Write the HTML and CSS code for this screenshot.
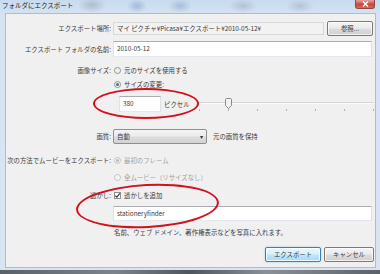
FILE: index.html
```html
<!DOCTYPE html>
<html lang="ja">
<head>
<meta charset="utf-8">
<link rel="stylesheet" href="styles.css">
</head>
<body>
<div class="window">
  <div class="titlebar">
    <span class="title">フォルダにエクスポート</span>
    <span class="close"><svg width="7" height="6" viewBox="0 0 7 6"><path d="M1 0.5 L6 5.5 M6 0.5 L1 5.5" stroke="#fff" stroke-width="1.4"/></svg></span>
  </div>
  <div class="body">
    <div class="row r-loc">
      <div class="label">エクスポート場所:</div>
      <div class="field readonly">マイ ピクチャ¥Picasa¥エクスポート¥2010-05-12¥</div>
      <div class="btn browse">参照...</div>
    </div>
    <div class="row r-name">
      <div class="label">エクスポート フォルダの名前:</div>
      <div class="field input wide">2010-05-12</div>
    </div>
    <div class="row r-size1">
      <div class="label">画像サイズ:</div>
      <span class="radio"></span><span>元のサイズを使用する</span>
    </div>
    <div class="row r-size2">
      <div class="label"></div>
      <span class="radio on"></span><span>サイズの変更:</span>
    </div>
    <div class="row r-px">
      <div class="label"></div>
      <div class="field input px">380</div>
      <span class="unit">ピクセル</span>
      <div class="slider">
        <div class="track"></div>
        <div class="ticks"><i></i><i></i><i></i><i></i><i></i><i></i><i></i></div>
        <div class="thumb"><svg width="7" height="11" viewBox="0 0 7 11"><path d="M0.5 1.5 Q0.5 0.5 1.5 0.5 L5.5 0.5 Q6.5 0.5 6.5 1.5 L6.5 7.5 L3.5 10.5 L0.5 7.5 Z" fill="#f2f2f2" stroke="#8a8a8a"/></svg></div>
      </div>
    </div>
    <div class="row r-q">
      <div class="label">画質:</div>
      <div class="combo"><span>自動</span><span class="arrow">▾</span></div>
      <span class="qnote">元の画質を保持</span>
    </div>
    <div class="row r-mov1 disabled">
      <div class="label enabled">次の方法でムービーをエクスポート:</div>
      <span class="radio on dis"></span><span>最初のフレーム</span>
    </div>
    <div class="row r-mov2 disabled">
      <div class="label"></div>
      <span class="radio dis"></span><span>全ムービー（リサイズなし）</span>
    </div>
    <div class="row r-wm">
      <div class="label">透かし:</div>
      <span class="check"><svg width="7" height="7" viewBox="0 0 7 7"><path d="M1.3 3.6 L2.9 5.2 L5.8 1.4" fill="none" stroke="#333" stroke-width="1.1"/></svg></span><span>透かしを追加</span>
    </div>
    <div class="row r-wmin">
      <div class="label"></div>
      <div class="field input wide">stationeryfinder</div>
    </div>
    <div class="row r-desc">
      <div class="label"></div>
      <span class="desc">名前、ウェブ ドメイン、著作権表示などを写真に入れます。</span>
    </div>
    <div class="row r-btn">
      <div class="btn default">エクスポート</div>
      <div class="btn cancel">キャンセル</div>
    </div>
  </div>
  <div class="taskbar"></div>
  <div class="ellipse e1"></div>
  <div class="ellipse e2"></div>
</div>
</body>
</html>
```

FILE: styles.css
```css
* { box-sizing: border-box; margin: 0; padding: 0; }
html, body { width: 380px; height: 274px; overflow: hidden; }
body {
  font-family: "Noto Sans CJK JP", "Noto Sans", sans-serif;
  font-size: 6.4px;
  color: #3a3a3a;
  background: #d5e2ef;
}
.window {
  position: relative;
  width: 380px;
  height: 274px;
  display: flex;
  flex-direction: column;
  background:
    radial-gradient(ellipse 14px 8px at 92px 5px, rgba(120,130,140,0.35), transparent),
    radial-gradient(ellipse 10px 7px at 137px 6px, rgba(80,120,170,0.35), transparent),
    radial-gradient(ellipse 12px 7px at 180px 6px, rgba(80,120,170,0.3), transparent),
    radial-gradient(ellipse 14px 7px at 243px 6px, rgba(120,130,140,0.3), transparent),
    radial-gradient(ellipse 14px 7px at 300px 6px, rgba(120,130,140,0.28), transparent),
    linear-gradient(#c8dbee, #d6e4f2 16px, #d8e5f1);
}
.titlebar {
  height: 13px;
  display: flex;
  align-items: flex-start;
  padding-left: 2px;
}
.title { font-size: 6.5px; line-height: 11px; color: #222; }
.close {
  margin-left: auto;
  margin-right: 5px;
  width: 20px;
  height: 9px;
  border: 1px solid #8a4b48;
  border-top: none;
  border-radius: 0 0 3px 3px;
  background: linear-gradient(#e3a29a, #c9473b 55%, #d56b58);
  display: flex;
  align-items: center;
  justify-content: center;
}
.close svg { display: block; }
.body {
  margin: 0 4px 0 5px;
  height: 255px;
  background: #f0f0f0;
  border: 1px solid #aebccb;
  display: flex;
  flex-direction: column;
}
.taskbar {
  margin-top: 2px;
  height: 4px;
  background: linear-gradient(90deg, #5a6068, #7d838a 30%, #4e555d 50%, #8a9097 70%, #5b6168);
}
.row { display: flex; align-items: center; flex: none; }
.label {
  width: 107px;
  flex: none;
  text-align: right;
  padding-right: 2px;
  white-space: nowrap;
}
.field {
  height: 14px;
  line-height: 12px;
  padding-left: 3px;
  white-space: nowrap;
  overflow: hidden;
}
.readonly {
  width: 211px;
  height: 13px;
  line-height: 11px;
  background: #f2f2f2;
  border: 1px solid #d8d8d8;
}
.input {
  background: #fff;
  border: 1px solid;
  border-color: #abadb3 #dbdfe6 #e3e9ef #e2e3ea;
}
.wide { width: 259px; }
.btn {
  height: 15px;
  border: 1px solid #7a7a7a;
  border-radius: 2px;
  background: linear-gradient(#f4f4f4, #ebebeb 48%, #dddddd 52%, #cfcfcf);
  box-shadow: inset 0 0 0 1px rgba(255,255,255,0.7);
  display: flex;
  align-items: center;
  justify-content: center;
  white-space: nowrap;
}
.browse { width: 46px; margin-left: 3px; }

.r-loc { margin-top: 7px; height: 15px; }
.r-name { margin-top: 5px; height: 16px; }
.r-name .input { height: 16px; line-height: 14px; }
.r-size1 { margin-top: 8px; height: 10px; }
.r-size2 { margin-top: 4px; height: 10px; }
.r-px { margin-top: 7px; height: 16px; }
.r-q { margin-top: 17px; height: 15px; }
.r-mov1 { margin-top: 11px; height: 10px; }
.r-mov2 { margin-top: 7px; height: 10px; }
.r-wm { margin-top: 8px; height: 10px; }
.r-wmin { margin-top: 6px; height: 15px; }
.r-wmin .input { height: 15px; line-height: 13px; }
.r-desc { margin-top: 6px; height: 10px; }
.r-btn { margin-top: 10px; height: 15px; justify-content: flex-end; padding-right: 1px; }

.radio {
  width: 7px;
  height: 7px;
  border-radius: 50%;
  border: 1px solid #8e8f8f;
  background: radial-gradient(circle, #e8e8e8, #fdfdfd);
  margin-left: 1px;
  margin-right: 3px;
  flex: none;
  display: flex;
  align-items: center;
  justify-content: center;
}
.radio.on::after {
  content: "";
  width: 3px;
  height: 3px;
  border-radius: 50%;
  background: #4a6a8a;
}
.radio.dis { border-color: #c4c4c4; background: #f4f4f4; }
.radio.on.dis::after { background: #b8b8b8; }
.disabled { color: #a0a0a0; }
.disabled .label.enabled { color: #3a3a3a; }

.px { width: 42px; height: 16px; line-height: 14px; margin-left: 6px; }
.unit { margin-left: 3px; }
.slider {
  position: relative;
  flex: 1;
  height: 16px;
  margin-left: 9px;
  margin-right: 1px;
}
.track {
  position: absolute;
  left: 0; right: 0; top: 6px;
  height: 2px;
  background: #d4d4d4;
  border-bottom: 1px solid #fafafa;
}
.ticks {
  position: absolute;
  left: 0; right: 0; top: 13px;
  display: flex;
  justify-content: space-between;
}
.ticks i { display: block; width: 1px; height: 2px; background: #b0b0b0; }
.thumb { position: absolute; left: 26px; top: 2px; }
.thumb svg { display: block; }

.combo {
  width: 94px;
  height: 15px;
  border: 1px solid #8e8f8f;
  border-radius: 2px;
  background: linear-gradient(#f4f4f4, #ebebeb 48%, #dddddd 52%, #d3d3d3);
  display: flex;
  align-items: center;
  padding-left: 3px;
  padding-right: 3px;
}
.combo .arrow { margin-left: auto; font-size: 6px; color: #333; }
.qnote { margin-left: 6px; }

.check {
  width: 7px;
  height: 7px;
  border: 1px solid #8e8f8f;
  background: #fff;
  margin-left: 1px;
  margin-right: 3px;
  flex: none;
}
.check svg { display: block; margin: -1px 0 0 -1px; }
.desc { margin-left: 1px; }

.default {
  width: 56px;
  border-color: #3c7fb1;
  background: linear-gradient(#eaf6fd, #d9f0fc 48%, #bee6fd 52%, #a7d9f5);
  box-shadow: inset 0 0 0 1px rgba(255,255,255,0.8), 0 0 2px #8ccaf0;
}
.cancel { width: 50px; margin-left: 3px; }

.ellipse {
  position: absolute;
  border: 2px solid #d0121e;
  border-radius: 50%;
}
.e1 { left: 93px; top: 88px; width: 106px; height: 31px; }
.e2 { left: 76px; top: 184px; width: 143px; height: 44px; transform: rotate(-3deg); }
```
